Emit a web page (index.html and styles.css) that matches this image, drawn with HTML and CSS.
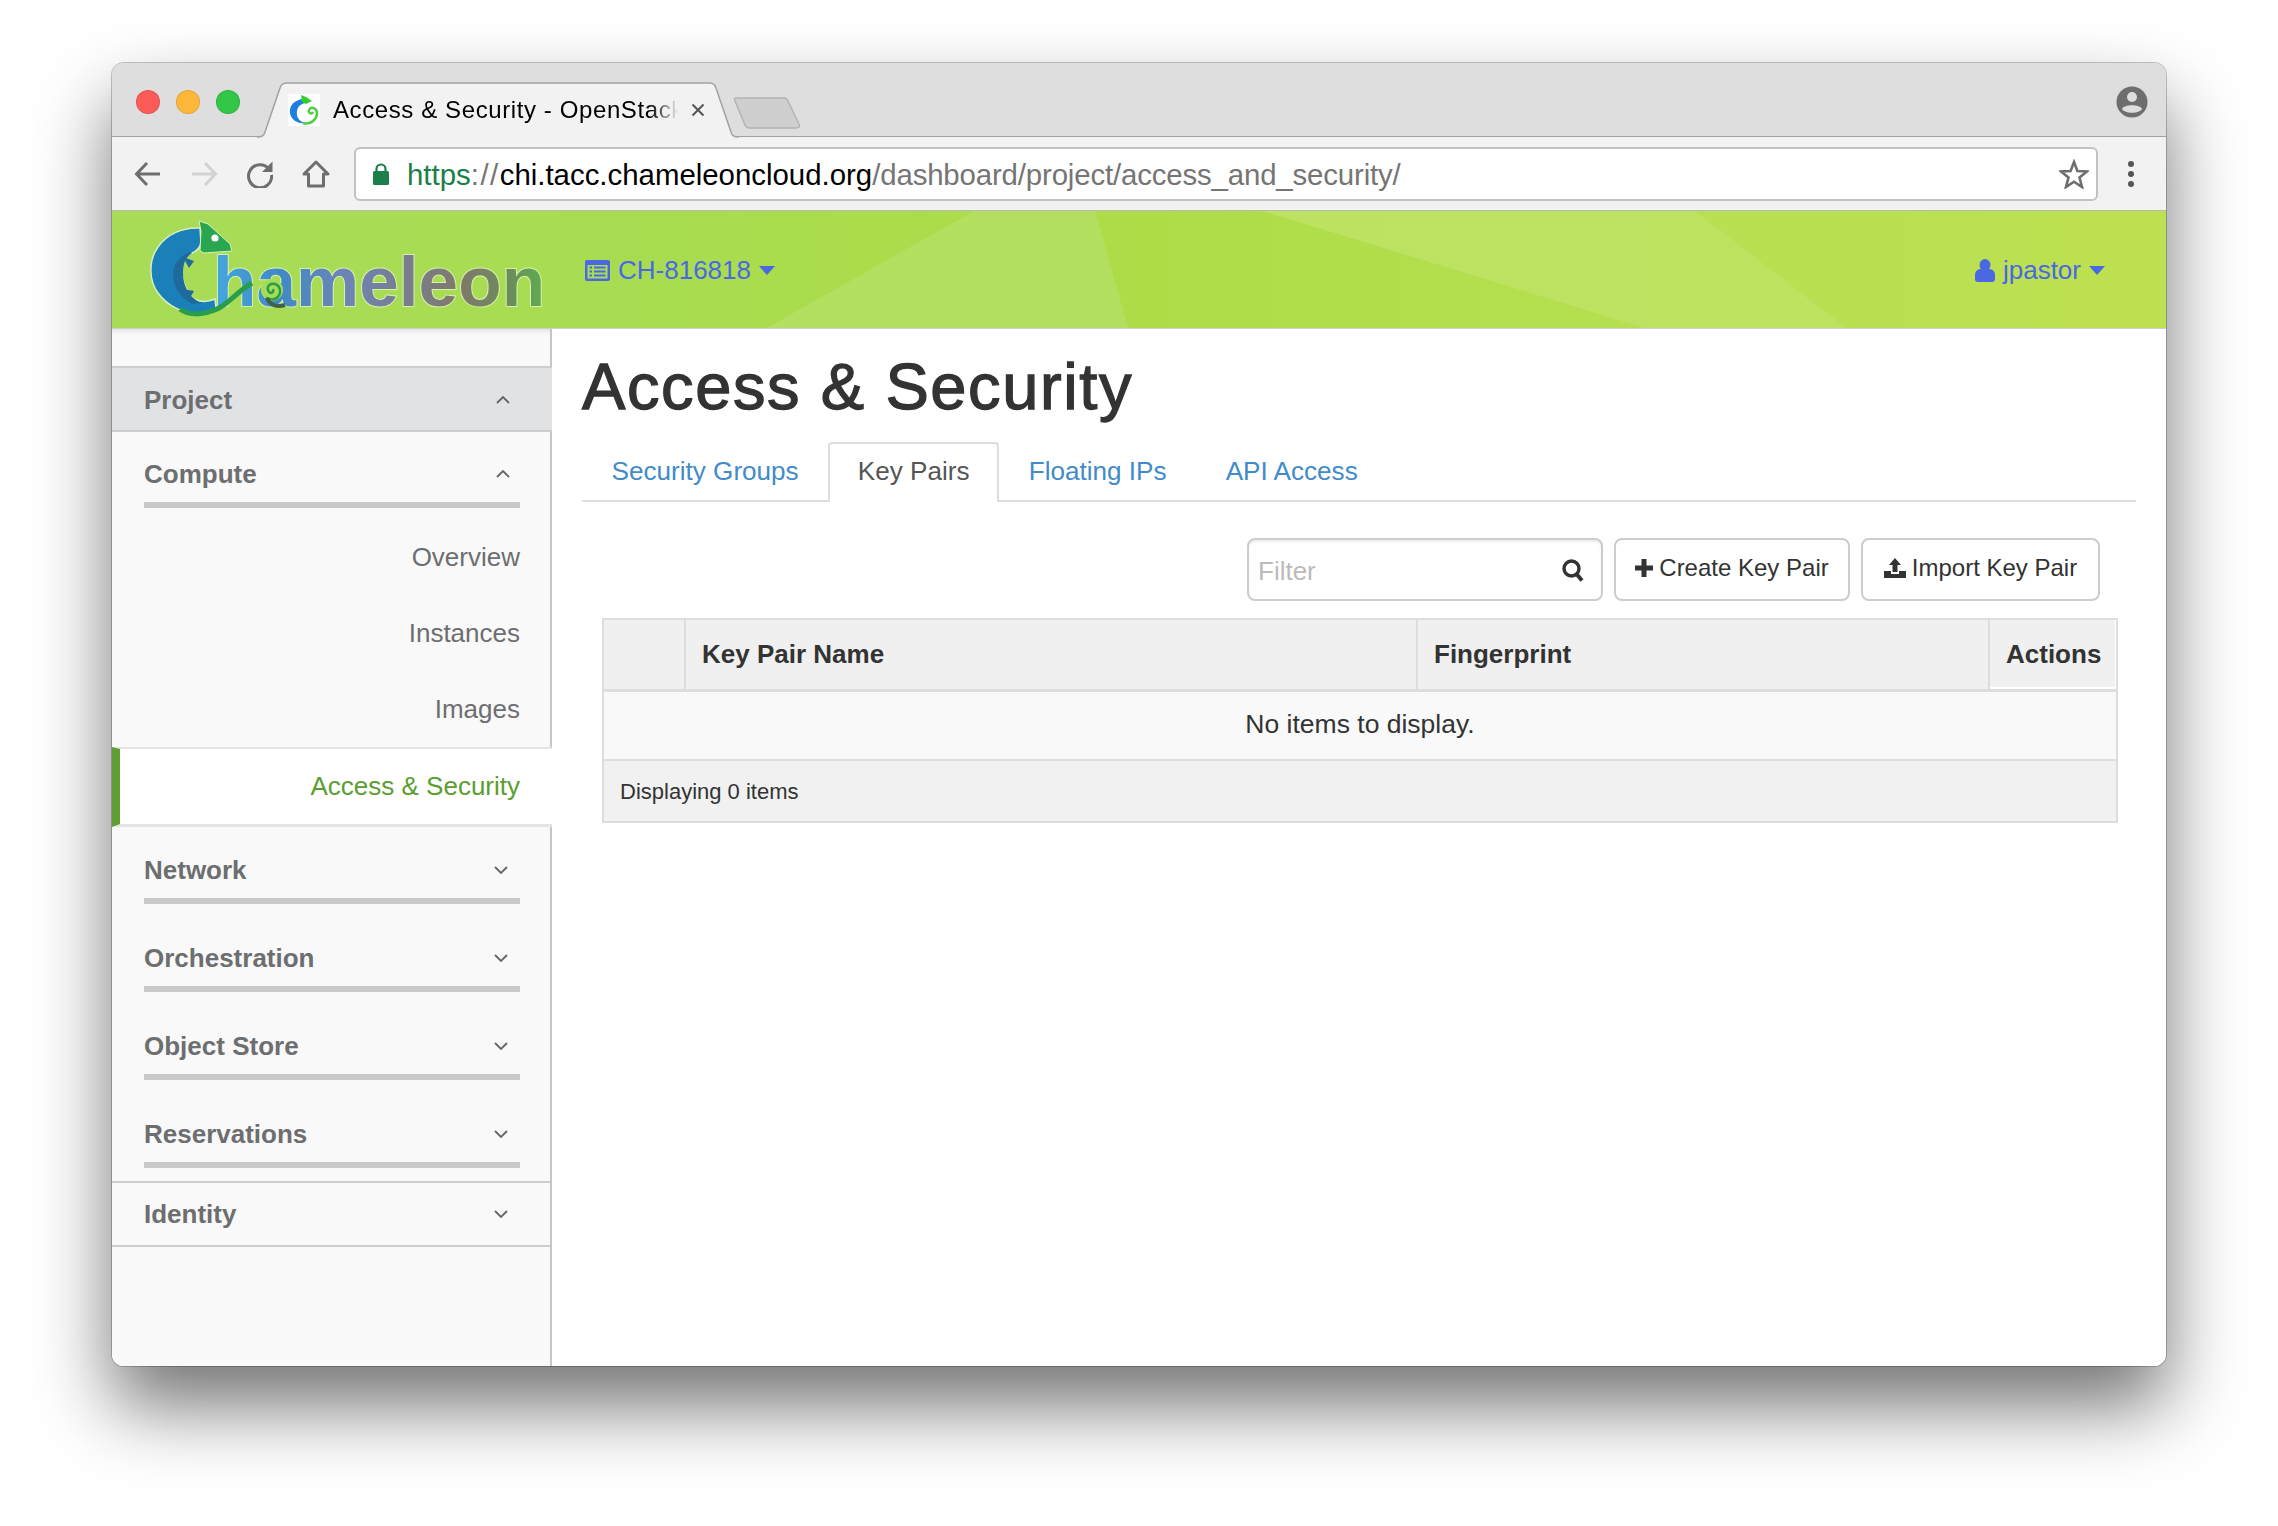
FILE: index.html
```html
<!DOCTYPE html>
<html lang="en">
  <head>
    <meta charset="UTF-8" />
    <title>Access &amp; Security - OpenStack Dashboard</title>
    <link rel="stylesheet" href="styles.css">
  </head>
  <body>
    <div class="window">
      <div class="tabstrip">
        <div class="lights">
          <span class="light light-red"></span>
          <span class="light light-yellow"></span>
          <span class="light light-green"></span>
        </div>
        <div class="browser-tab">
          <svg class="browser-tab-shape" width="482" height="56" viewBox="0 0 482 56">
            <path d="M0 55 C6 55 7 53 8 50 L23 6 C24 2 26 1 30 1 L452 1 C456 1 458 2 459 6 L474 50 C475 53 476 55 482 55" fill="#f2f2f2" stroke="#a2a2a2" stroke-width="1.5" />
          </svg>
          <svg class="favicon" width="32" height="32" viewBox="0 0 32 32">
            <rect width="32" height="32" fill="#fff" />
            <path d="M15 5 C6 6 1 12 2 19 C3 26 10 30 17 29 C11 27 8 23 9 17 C10 12 13 10 17 9 Z" fill="#1f7fe0" />
            <path d="M13 1 L18 3 L24 7 L18 10 L14 8 Z" fill="#2fd02f" />
            <path d="M15 29 C22 31 29 26 29 19 C29 14 23 12 21 16 C20 19 24 21 25 18" fill="none" stroke="#4dcf3c" stroke-width="2.5" />
          </svg>
          <span class="browser-tab-title">Access &amp; Security - OpenStack</span>
          <svg class="browser-tab-close" width="14" height="14" viewBox="0 0 14 14">
            <path d="M1.5 1.5 L12.5 12.5 M12.5 1.5 L1.5 12.5" stroke="#555" stroke-width="2" />
          </svg>
        </div>
        <svg class="newtab" width="66" height="32" viewBox="0 0 66 32">
          <path d="M2 1 L50 1 C52 1 53 2 54 4 L65 27 C66 30 65 31 62 31 L15 31 C13 31 12 30 11 28 L1 4 C0 2 0 1 2 1 Z" fill="#cfcfcf" stroke="#b3b3b3" stroke-width="1.5" />
        </svg>
        <svg class="profile" width="32" height="32" viewBox="0 0 32 32">
          <circle cx="16" cy="16" r="15.5" fill="#6e6e6e" />
          <circle cx="16" cy="11" r="5" fill="#dedede" />
          <path d="M6 23 C8 18 24 18 26 23 C23 28 9 28 6 23 Z" fill="#dedede" />
        </svg>
      </div>

      <div class="toolbar">
        <button class="nav-btn">
          <svg width="28" height="28" viewBox="0 0 28 28"><path d="M26 14 H3 M13 3 L2.5 14 L13 25" fill="none" stroke="#6e6e6e" stroke-width="3" /></svg>
        </button>
        <button class="nav-btn">
          <svg width="28" height="28" viewBox="0 0 28 28"><path d="M2 14 H25 M15 3 L25.5 14 L15 25" fill="none" stroke="#d2d2d2" stroke-width="3" /></svg>
        </button>
        <button class="nav-btn">
          <svg width="28" height="28" viewBox="0 0 28 28"><path d="M23 9 A11.5 11.5 0 1 0 25.5 15" fill="none" stroke="#6e6e6e" stroke-width="3" /><path d="M26.5 1.5 V12 H16 Z" fill="#6e6e6e" /></svg>
        </button>
        <button class="nav-btn">
          <svg width="28" height="28" viewBox="0 0 28 28"><path d="M14 2 L26 14 H21.5 V26 H6.5 V14 H2 Z" fill="none" stroke="#6e6e6e" stroke-width="3" stroke-linejoin="round" /></svg>
        </button>
        <div class="addressbar">
          <svg class="lock" width="16" height="22" viewBox="0 0 16 22">
            <path d="M3.5 9 V6 A4.5 4.5 0 0 1 12.5 6 V9" fill="none" stroke="#1a7f49" stroke-width="2.2" />
            <rect y="8" width="16" height="14" rx="1.5" fill="#1a7f49" />
          </svg>
          <span class="url"><span class="url-scheme">https</span><span class="url-sep">://</span><span class="url-host">chi.tacc.chameleoncloud.org</span><span class="url-path">/dashboard/project/access_and_security/</span></span>
          <svg class="star" width="30" height="30" viewBox="0 0 30 30">
            <path d="M15 3 L18.4 12 L28 12.5 L20.5 18.5 L23 28 L15 22.7 L7 28 L9.5 18.5 L2 12.5 L11.6 12 Z" fill="none" stroke="#6e6e6e" stroke-width="2.6" />
          </svg>
        </div>
        <div class="menu-dots"><span></span><span></span><span></span></div>
      </div>

      <header class="topbar">
        <svg class="logo" width="420" height="112" viewBox="0 0 420 112">
          <defs>
            <linearGradient id="logo-text" gradientUnits="userSpaceOnUse" x1="73" y1="0" x2="402" y2="0">
              <stop offset="0" stop-color="#45a8de" />
              <stop offset="0.2" stop-color="#3f8ac6" />
              <stop offset="0.4" stop-color="#6d84b6" />
              <stop offset="0.58" stop-color="#7a7d90" />
              <stop offset="0.76" stop-color="#7e7a68" />
              <stop offset="0.9" stop-color="#6c8c5c" />
              <stop offset="1" stop-color="#60aa52" />
            </linearGradient>
          </defs>
          <path d="M60 17 C42 16 26 24 18 36 C8 50 9 70 18 82 C28 96 44 103 62 102 C68 102 73 100 76 97 L75 88 C68 91 60 91 54 88 C47 82 43 72 42 62 C42 52 46 44 52 42 C57 40 60 36 61 32 Z" fill="#1b80b9" stroke="#d8efc0" stroke-width="1.5" />
          <path d="M50 41 C38 46 33 54 33 64 C33 76 40 86 52 93 L62 92 C50 88 43 76 43 62 C43 52 46 46 52 42 Z" fill="#1f6a9c" />
          <path d="M43 46 L54 50 L49 57 Z M42 78 L54 80 L50 87 Z" fill="#1f6a9c" />
          <path d="M59 10 L68 13 L90 33 L92 40 L64 42 L60 40 L61 20 Z" fill="#2aa650" stroke="#d8efc0" stroke-width="1" />
          <circle cx="75" cy="27" r="3.6" fill="#fff" />
          <text class="logo-text" x="73" y="95" textLength="332" fill="url(#logo-text)">hameleon</text>
          <path d="M40 98 C48 104 62 105 77 98 C88 93 98 80 112 72" fill="none" stroke="#2a9d4a" stroke-width="5" />
          <circle cx="132" cy="79" r="11" fill="#a6dc55" />
          <path d="M126 87 C138 92 142 82 139 76 C135 70 126 73 128 79 C130 84 134 82 133 78" fill="none" stroke="#2a9d4a" stroke-width="2.5" />
          <path d="M127 87 C130 95 138 96 145 94" fill="none" stroke="#40604a" stroke-width="4" />
        </svg>
        <a class="topbar-link project-link" href="#">
          <svg width="25" height="21" viewBox="0 0 25 21">
            <rect width="25" height="21" rx="2" fill="#4a68e2" />
            <rect x="2.5" y="5" width="20" height="13.5" fill="#a9dd56" />
            <path d="M4.5 7.5 H7 M9 7.5 H20.5 M4.5 11.5 H7 M9 11.5 H20.5 M4.5 15.5 H7 M9 15.5 H20.5" stroke="#4a68e2" stroke-width="2" />
          </svg>
          CH-816818
          <span class="caret"></span>
        </a>
        <a class="topbar-link user-link" href="#">
          <svg width="20" height="23" viewBox="0 0 20 23">
            <ellipse cx="10" cy="6" rx="5.5" ry="6" fill="#4a68e2" />
            <path d="M0 16 C0 12 3 10 6 10 H14 C17 10 20 12 20 16 V20 C20 22 19 23 17 23 H3 C1 23 0 22 0 20 Z" fill="#4a68e2" />
          </svg>
          jpastor
          <span class="caret"></span>
        </a>
      </header>

      <div class="layout">
        <aside class="sidebar">
          <div class="dash-head">
            <span>Project</span>
            <svg class="chevron chevron-up" width="14" height="8" viewBox="0 0 14 8"><path d="M1 7 L7 1 L13 7" /></svg>
          </div>
          <div class="nav-group nav-group-open">
            <div class="nav-title">
              <span>Compute</span>
              <svg class="chevron chevron-up" width="14" height="8" viewBox="0 0 14 8"><path d="M1 7 L7 1 L13 7" /></svg>
            </div>
            <ul class="nav-list">
              <li><a href="#">Overview</a></li>
              <li><a href="#">Instances</a></li>
              <li><a href="#">Images</a></li>
              <li class="active"><a href="#">Access &amp; Security</a></li>
            </ul>
          </div>
          <div class="nav-group nav-group-first">
            <div class="nav-title">
              <span>Network</span>
              <svg class="chevron" width="14" height="8" viewBox="0 0 14 8"><path d="M1 1 L7 7 L13 1" /></svg>
            </div>
          </div>
          <div class="nav-group">
            <div class="nav-title">
              <span>Orchestration</span>
              <svg class="chevron" width="14" height="8" viewBox="0 0 14 8"><path d="M1 1 L7 7 L13 1" /></svg>
            </div>
          </div>
          <div class="nav-group">
            <div class="nav-title">
              <span>Object Store</span>
              <svg class="chevron" width="14" height="8" viewBox="0 0 14 8"><path d="M1 1 L7 7 L13 1" /></svg>
            </div>
          </div>
          <div class="nav-group nav-group-last">
            <div class="nav-title">
              <span>Reservations</span>
              <svg class="chevron" width="14" height="8" viewBox="0 0 14 8"><path d="M1 1 L7 7 L13 1" /></svg>
            </div>
          </div>
          <div class="dash-head dash-head-plain">
            <span>Identity</span>
            <svg class="chevron" width="14" height="8" viewBox="0 0 14 8"><path d="M1 1 L7 7 L13 1" /></svg>
          </div>
        </aside>

        <main class="content">
          <h1 class="page-title">Access &amp; Security</h1>
          <ul class="tabs">
            <li><a href="#">Security Groups</a></li>
            <li class="active"><a href="#">Key Pairs</a></li>
            <li><a href="#">Floating IPs</a></li>
            <li><a href="#">API Access</a></li>
          </ul>
          <div class="table-actions">
            <div class="filter">
              <input type="text" placeholder="Filter" />
              <svg class="filter-icon" width="22" height="24" viewBox="0 0 22 24">
                <circle cx="9.5" cy="9.5" r="7.5" fill="none" stroke="#333" stroke-width="3.4" />
                <path d="M14.5 15 L20 21.5" stroke="#333" stroke-width="4" />
              </svg>
            </div>
            <button class="btn btn-create">
              <svg width="18" height="18" viewBox="0 0 18 18"><path d="M9 0 V18 M0 9 H18" stroke="#333" stroke-width="5" /></svg>
              Create Key Pair
            </button>
            <button class="btn btn-import">
              <svg width="22" height="20" viewBox="0 0 22 20">
                <path d="M11 0 L17 7 H13.5 V14 H8.5 V7 H5 Z" fill="#333" />
                <path d="M0 13 H7 V16 H15 V13 H22 V20 H0 Z" fill="#333" />
              </svg>
              Import Key Pair
            </button>
          </div>
          <table class="data-table">
            <thead>
              <tr>
                <th class="col-check"></th>
                <th class="col-name">Key Pair Name</th>
                <th class="col-print">Fingerprint</th>
                <th class="col-actions">Actions</th>
              </tr>
            </thead>
            <tbody>
              <tr><td class="empty" colspan="4">No items to display.</td></tr>
            </tbody>
            <tfoot>
              <tr><td colspan="4">Displaying 0 items</td></tr>
            </tfoot>
          </table>
        </main>
      </div>
    </div>
  </body>
</html>
```

FILE: styles.css
```css
html, body {
  height: 100%;
}
body {
  margin: 0;
  padding: 63px 112px 0 112px;
  box-sizing: border-box;
  background-color: #fff;
  color: #333;
  font-family: "Liberation Sans", Arial, sans-serif;
  font-size: 26px;
  overflow: hidden;
}
a {
  text-decoration: none;
}
ul {
  list-style: none;
  margin: 0;
  padding: 0;
}
.window {
  height: 1303px;
  display: flex;
  flex-direction: column;
  border-radius: 12px;
  overflow: hidden;
  background-color: #f9f9f9;
  box-shadow: 0 40px 76px rgba(0, 0, 0, 0.55), 0 0 0 1px rgba(0, 0, 0, 0.22);
}

/* browser chrome */
.tabstrip {
  height: 74px;
  flex: none;
  display: flex;
  box-sizing: border-box;
  background-color: #dedede;
  border-bottom: 1px solid #a2a2a2;
}
.lights {
  display: flex;
  gap: 16px;
  margin: 27px 0 0 24px;
}
.light {
  width: 24px;
  height: 24px;
  box-sizing: border-box;
  border-radius: 50%;
  border: 1px solid rgba(0, 0, 0, 0.1);
}
.light-red {
  background-color: #fc5b57;
}
.light-yellow {
  background-color: #fdb83a;
}
.light-green {
  background-color: #33c748;
}
.browser-tab {
  position: relative;
  width: 482px;
  height: 56px;
  margin: 19px 0 0 17px;
  flex: none;
}
.browser-tab-shape {
  position: absolute;
  left: 0;
  top: 0;
}
.favicon {
  position: absolute;
  left: 31px;
  top: 12px;
}
.browser-tab-title {
  position: absolute;
  left: 76px;
  top: 14px;
  width: 345px;
  overflow: hidden;
  white-space: nowrap;
  font-size: 24px;
  letter-spacing: 0.6px;
  line-height: 28px;
  color: #000;
  -webkit-mask-image: linear-gradient(to right, #000 92%, transparent);
  mask-image: linear-gradient(to right, #000 92%, transparent);
}
.browser-tab-close {
  position: absolute;
  left: 434px;
  top: 21px;
}
.newtab {
  margin: 34px 0 0 -5px;
  flex: none;
}
.profile {
  margin: 23px 18px 0 auto;
  flex: none;
}
.toolbar {
  height: 74px;
  flex: none;
  display: flex;
  align-items: center;
  box-sizing: border-box;
  padding-left: 8px;
  background-color: #f2f2f2;
  border-bottom: 1px solid #b8b8b8;
}
.nav-btn {
  width: 56px;
  height: 56px;
  flex: none;
  padding: 0;
  border: 0;
  background: none;
  display: flex;
  align-items: center;
  justify-content: center;
}
.addressbar {
  flex: 1;
  height: 54px;
  margin-left: 10px;
  box-sizing: border-box;
  display: flex;
  align-items: center;
  padding: 0 7px 0 17px;
  background-color: #fff;
  border: 2px solid #c2c2c2;
  border-radius: 6px;
}
.lock {
  margin-right: 18px;
  flex: none;
}
.url {
  flex: 1;
  padding-top: 2px;
  font-size: 29.4px;
  white-space: nowrap;
  color: #000;
}
.url-scheme {
  color: #1a7f49;
}
.url-sep {
  color: #757575;
  letter-spacing: 1.5px;
}
.url-host {
  color: #000;
}
.url-path {
  color: #757575;
  letter-spacing: -0.15px;
}
.menu-dots {
  width: 68px;
  flex: none;
  box-sizing: border-box;
  padding-right: 2px;
  display: flex;
  flex-direction: column;
  align-items: center;
  gap: 4px;
}
.menu-dots span {
  width: 6px;
  height: 6px;
  border-radius: 50%;
  background-color: #555;
}

/* site header */
.topbar {
  position: relative;
  height: 118px;
  flex: none;
  display: flex;
  align-items: center;
  box-sizing: border-box;
  padding-right: 61px;
  border-bottom: 1px solid #cfcfcf;
  background: linear-gradient(to right, #a8dc58 0%, #a8dc50 25%, #addc47 50%, #b8e052 78%, #bde050 100%);
}
.topbar::before,
.topbar::after {
  content: "";
  position: absolute;
  left: 0;
  top: 0;
  width: 100%;
  height: 117px;
}
.topbar::before {
  background: linear-gradient(to right, #b4e062, #b2df5c);
  clip-path: polygon(862px 0, 983px 0, 1016px 117px, 655px 117px);
}
.topbar::after {
  background: linear-gradient(to right, #bbe167, #bee35f);
  clip-path: polygon(1151px 0, 1583px 0, 1734px 117px, 1533px 117px);
}
.logo {
  position: relative;
  z-index: 1;
  margin: -5px 0 0 28px;
  flex: none;
  filter: blur(0.6px);
}
.logo-text {
  font-family: "Liberation Sans", Arial, sans-serif;
  font-weight: bold;
  font-size: 71px;
  stroke: rgba(255, 255, 255, 0.55);
  stroke-width: 2px;
  paint-order: stroke;
}
.topbar-link {
  position: relative;
  z-index: 1;
  display: flex;
  align-items: center;
  gap: 8px;
  padding-top: 2px;
  color: #4a68e2;
  font-size: 26px;
}
.project-link {
  margin-left: 25px;
}
.user-link {
  margin-left: auto;
}
.caret {
  width: 0;
  height: 0;
  border-left: 8px solid transparent;
  border-right: 8px solid transparent;
  border-top: 9px solid #4a68e2;
}

/* sidebar */
.layout {
  flex: 1;
  display: flex;
  min-height: 0;
  background-color: #fff;
}
.sidebar {
  width: 440px;
  flex: none;
  box-sizing: border-box;
  padding-top: 37px;
  background-color: #f9f9f9;
  border-right: 2px solid #c6c6c6;
  box-shadow: inset 0 6px 6px -6px rgba(0, 0, 0, 0.18);
  color: #6d6e70;
}
.dash-head {
  height: 66px;
  margin-right: -2px;
  box-sizing: border-box;
  display: flex;
  align-items: center;
  justify-content: space-between;
  padding: 2px 42px 0 32px;
  background-color: #e1e2e4;
  border-top: 2px solid #cdcdcd;
  border-bottom: 2px solid #cdcdcd;
  font-weight: bold;
}
.dash-head-plain {
  height: 66px;
  margin-right: 0;
  padding-top: 0;
  padding-right: 42px;
  background-color: transparent;
}
.nav-group {
  padding: 0 30px 26px 32px;
}
.nav-group-open {
  padding: 14px 0 0;
}
.nav-group-first {
  padding-top: 15px;
}
.nav-group-last {
  padding-bottom: 13px;
}
.nav-title {
  height: 56px;
  display: flex;
  align-items: center;
  justify-content: space-between;
  padding-right: 12px;
  border-bottom: 6px solid #c9c9c9;
  font-weight: bold;
}
.nav-group-open .nav-title {
  margin: 0 30px 0 32px;
  padding-right: 10px;
}
.nav-list {
  margin-top: 11px;
}
.nav-list li {
  height: 76px;
  display: flex;
  align-items: center;
  justify-content: flex-end;
  padding-right: 30px;
}
.nav-list a {
  color: #6d6e70;
}
.nav-list .active {
  height: 80px;
  margin-right: -2px;
  padding-right: 32px;
  box-sizing: border-box;
  background-color: #fff;
  border-left: 8px solid #5f9f32;
  border-top: 2px solid #e4e4e4;
  border-bottom: 3px solid #e4e4e4;
}
.nav-list .active a {
  color: #5a9e2f;
}
.chevron path {
  fill: none;
  stroke: #666;
  stroke-width: 1.8;
}

/* main content */
.content {
  flex: 1;
  min-width: 0;
  padding: 0 30px;
}
.page-title {
  margin: 0;
  height: 113px;
  line-height: 116px;
  font-size: 65px;
  font-weight: normal;
  letter-spacing: 1.6px;
  -webkit-text-stroke: 1.3px #333;
  color: #333;
}
.tabs {
  display: flex;
  height: 60px;
  box-sizing: border-box;
  border-bottom: 2px solid #ddd;
  font-size: 26.1px;
}
.tabs li {
  height: 60px;
  box-sizing: border-box;
  padding: 0 27.6px;
  border: 2px solid transparent;
  border-bottom: 0;
  line-height: 54px;
  border-radius: 4px 4px 0 0;
}
.tabs a {
  color: #428bca;
}
.tabs .active {
  background-color: #fff;
  border-color: #ddd;
}
.tabs .active a {
  color: #555;
}
.table-actions {
  display: flex;
  justify-content: flex-end;
  gap: 11px;
  margin: 36px 36px 17px 0;
}
.filter {
  position: relative;
  width: 356px;
  height: 63px;
}
.filter input {
  width: 100%;
  height: 100%;
  box-sizing: border-box;
  padding: 4px 50px 0 9px;
  border: 2px solid #ccc;
  border-radius: 8px;
  box-shadow: inset 0 2px 2px rgba(0, 0, 0, 0.075);
  font-family: inherit;
  font-size: 26px;
  color: #333;
}
.filter input::placeholder {
  color: #bbb;
}
.filter-icon {
  position: absolute;
  right: 19px;
  top: 21px;
}
.btn {
  height: 63px;
  box-sizing: border-box;
  display: flex;
  align-items: center;
  justify-content: center;
  gap: 6px;
  padding: 0 0 4px;
  background-color: #fff;
  border: 2px solid #ccc;
  border-radius: 8px;
  font-family: inherit;
  font-size: 24px;
  color: #333;
}
.btn-create {
  width: 236px;
}
.btn-import {
  width: 239px;
}
.data-table {
  width: 1514px;
  margin-left: 20px;
  table-layout: fixed;
  border-collapse: collapse;
  border: 2px solid #ddd;
}
.data-table th {
  height: 71px;
  padding: 0 0 0 16px;
  box-sizing: border-box;
  text-align: left;
  font-size: 26px;
  color: #333;
  background-color: #f0f0f0;
  border-left: 2px solid #ddd;
  border-bottom: 3px solid #ddd;
}
.col-check {
  width: 82px;
}
.col-name {
  width: 732px;
}
.col-print {
  width: 572px;
}
.col-actions {
  width: 128px;
  box-shadow: inset -1px -2px 0 #fff;
}
.data-table .empty {
  height: 70px;
  box-sizing: border-box;
  padding: 0 0 2px;
  text-align: center;
  font-size: 26.5px;
  background-color: #f9f9f9;
  border-bottom: 2px solid #ddd;
}
.data-table tfoot td {
  height: 62px;
  box-sizing: border-box;
  padding: 1px 0 0 16px;
  font-size: 22px;
  background-color: #f1f1f1;
}
```
